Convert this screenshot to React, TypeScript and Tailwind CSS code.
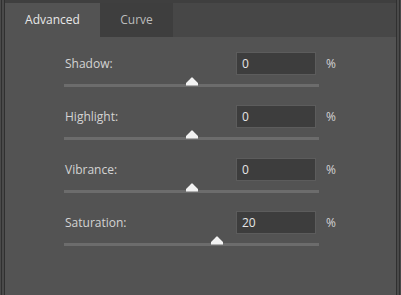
import React from 'react';

interface SliderRowProps {
  label: string;
  value: number;
}

const Thumb: React.FC = () => (
  <svg width="13" height="9" viewBox="0 0 13 9" className="block">
    <path d="M6.5 0.5 C7.2 0.5 7.6 1 8.2 1.7 L12.5 6 L12.5 8.5 L0.5 8.5 L0.5 6 L4.8 1.7 C5.4 1 5.8 0.5 6.5 0.5 Z" fill="#f2f2f2" />
  </svg>
);

const SliderRow: React.FC<SliderRowProps> = ({ label, value }) => {
  // range -100..100
  const pct = ((value + 100) / 200) * 100;
  return (
    <div className="flex flex-col">
      <div className="flex items-center h-[23px]">
        <span className="w-[172px] pl-[1px] text-[12px] text-[#d4d4d4]">{label}</span>
        <div className="w-[80px] h-[23px] bg-[#3d3d3d] border border-[#5c5c5c] flex items-center pl-[5px] text-[12px] text-[#e6e6e6]">
          {value}
        </div>
        <span className="ml-[10px] text-[12px] text-[#d4d4d4]">%</span>
      </div>
      <div className="relative mt-[9px] w-[255px] h-[3px] bg-[#6c6c6c]">
        <div className="absolute bottom-[1px] -translate-x-1/2" style={{ left: `${pct}%` }}>
          <Thumb />
        </div>
      </div>
    </div>
  );
};

export default function App() {
  const rows = [
    { label: 'Shadow:', value: 0 },
    { label: 'Highlight:', value: 0 },
    { label: 'Vibrance:', value: 0 },
    { label: 'Saturation:', value: 20 },
  ];

  return (
    <div className="w-[401px] h-[295px] bg-[#4a4a4a] pl-[1px] pr-[1px] flex font-['Open_Sans',sans-serif] overflow-hidden">
      <div className="flex-1 flex border-l border-r border-[#303030] pl-[2px] pr-[2px]">
        <div className="flex-1 flex flex-col border-l border-r border-[#303030] bg-[#535353]">
          <div className="h-[37px] bg-[#474747] flex items-end shrink-0 border-t-[3px] border-[#3f3f3f]">
            <div className="w-[95px] h-[34px] bg-[#535353] flex items-center justify-center text-[12px] text-[#e8e8e8]">
              Advanced
            </div>
            <div className="w-[73px] h-[34px] bg-[#3e3e3e] flex items-center justify-center text-[12px] text-[#bcbcbc]">
              Curve
            </div>
          </div>
          <div className="flex flex-col gap-[18px] pt-[15px] pl-[59px]">
            {rows.map(r => (
              <SliderRow key={r.label} label={r.label} value={r.value} />
            ))}
          </div>
        </div>
      </div>
    </div>
  );
}
